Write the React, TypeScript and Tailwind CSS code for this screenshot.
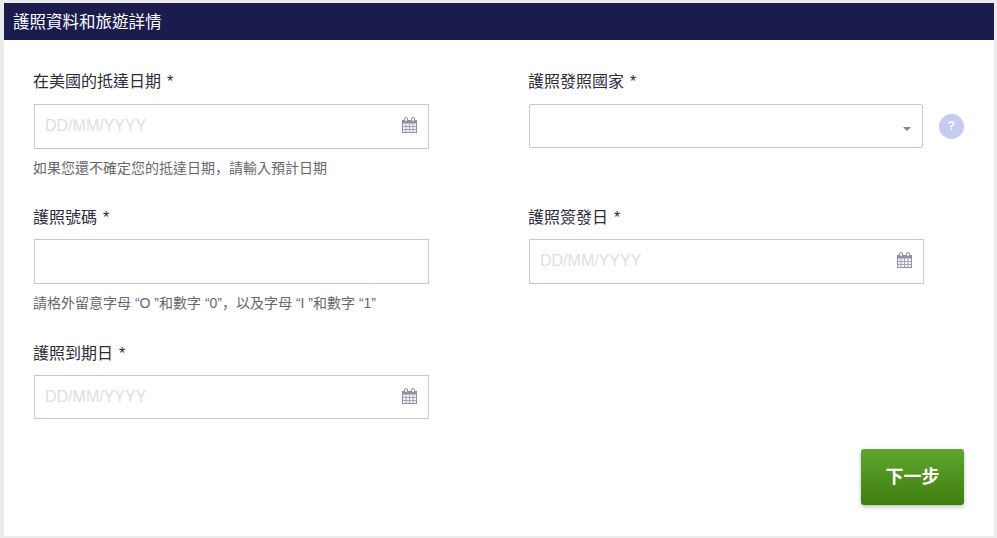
import React from "react";

function CalendarIcon() {
  return (
    <svg width="15" height="16" viewBox="0 0 15 16" className="block -mt-[3px]" fill="none">
      <rect x="0.5" y="3.5" width="14" height="12" fill="#f4f4f8" stroke="#8f8fa3" />
      <rect x="0.5" y="3.5" width="14" height="3" fill="#8f8fa3" />
      <path d="M0.5 9.5H14.5M0.5 12.5H14.5M4 6.5V15.5M7.5 6.5V15.5M11 6.5V15.5" stroke="#a5a5b5" strokeWidth="1" />
      <rect x="2.5" y="0.5" width="3" height="4" rx="1.5" fill="#fff" stroke="#8f8fa3" />
      <rect x="9.5" y="0.5" width="3" height="4" rx="1.5" fill="#fff" stroke="#8f8fa3" />
    </svg>
  );
}

function Label({ children }: { children: React.ReactNode }) {
  return <div className="-ml-px h-5 text-[16px] leading-[22px] text-[#2b2b3a] whitespace-nowrap [word-spacing:1.5px]">{children}</div>;
}

function DateBox({ tall = true }: { tall?: boolean }) {
  return (
    <div className={`${tall ? "h-[45px]" : "h-[44px]"} flex items-center justify-between border border-[#c5c6e0] bg-white pl-[10px] pr-[11px]`}>
      <span className={`${tall ? "-mt-[2px]" : "-mt-px"} text-[16px] text-[#dedee2]`}>DD/MM/YYYY</span>
      <CalendarIcon />
    </div>
  );
}

function Help({ children }: { children: React.ReactNode }) {
  return <div className="-ml-px mt-[9px] h-[18px] text-[14px] leading-[18px] text-[#66666c] whitespace-nowrap">{children}</div>;
}

function Comma() {
  return <span className="font-['Noto_Sans_CJK_SC']">，</span>;
}

export default function App() {
  return (
    <div className="h-[538px] w-[997px] overflow-hidden bg-[#ececec] pl-[4px] pr-[3px] pt-[3px] pb-[2px] font-['Liberation_Sans','Noto_Sans_CJK_TC',sans-serif]">
      <div className="flex h-full flex-col bg-white">
        <div className="flex h-[37px] items-center bg-[#1b1c4e] pl-[9px] pt-[2px] text-[16.5px] text-white">護照資料和旅遊詳情</div>
        <div className="flex flex-1 flex-col px-[30px] pt-[31px]">
          <div className="grid grid-cols-[395px_435px] gap-x-[100px]">
            <div className="flex h-[136px] flex-col">
              <Label>在美國的抵達日期 *</Label>
              <div className="mt-[13px]"><DateBox /></div>
              <Help>如果您還不確定您的抵達日期<Comma />請輸入預計日期</Help>
            </div>
            <div className="flex h-[136px] flex-col">
              <Label>護照發照國家 *</Label>
              <div className="mt-[13px] flex items-center">
                <div className="flex h-[44px] w-[394px] items-center justify-end rounded-[2px] border border-[#c5c6e0] bg-white pr-[11px]">
                  <span className="mt-[5px] h-0 w-0 border-x-[4px] border-t-[4px] border-x-transparent border-t-[#85858f]" />
                </div>
                <div className="ml-[16px] flex h-[25px] w-[25px] items-center justify-center rounded-full bg-[#c6cbf0] text-[12px] font-bold text-white">?</div>
              </div>
            </div>
            <div className="flex h-[136px] flex-col">
              <Label>護照號碼 *</Label>
              <div className="mt-[12px] h-[45px] border border-[#c5c6e0] bg-white" />
              <Help>請格外留意字母 “O ”和數字 “0”<Comma />以及字母 “I ”和數字 “1”</Help>
            </div>
            <div className="flex h-[136px] flex-col">
              <Label>護照簽發日 *</Label>
              <div className="mt-[12px] w-[395px]"><DateBox /></div>
            </div>
            <div className="flex flex-col">
              <Label>護照到期日 *</Label>
              <div className="mt-[12px]"><DateBox tall={false} /></div>
            </div>
          </div>
          <div className="mt-[30px] flex justify-end">
            <div className="flex h-[56px] w-[103px] items-center justify-center rounded-[3px] bg-gradient-to-b from-[#5ea72e] to-[#3f7d0c] text-[18px] font-bold text-white shadow-[0_2px_4px_rgba(0,0,0,0.25)]">下一步</div>
          </div>
        </div>
      </div>
    </div>
  );
}
